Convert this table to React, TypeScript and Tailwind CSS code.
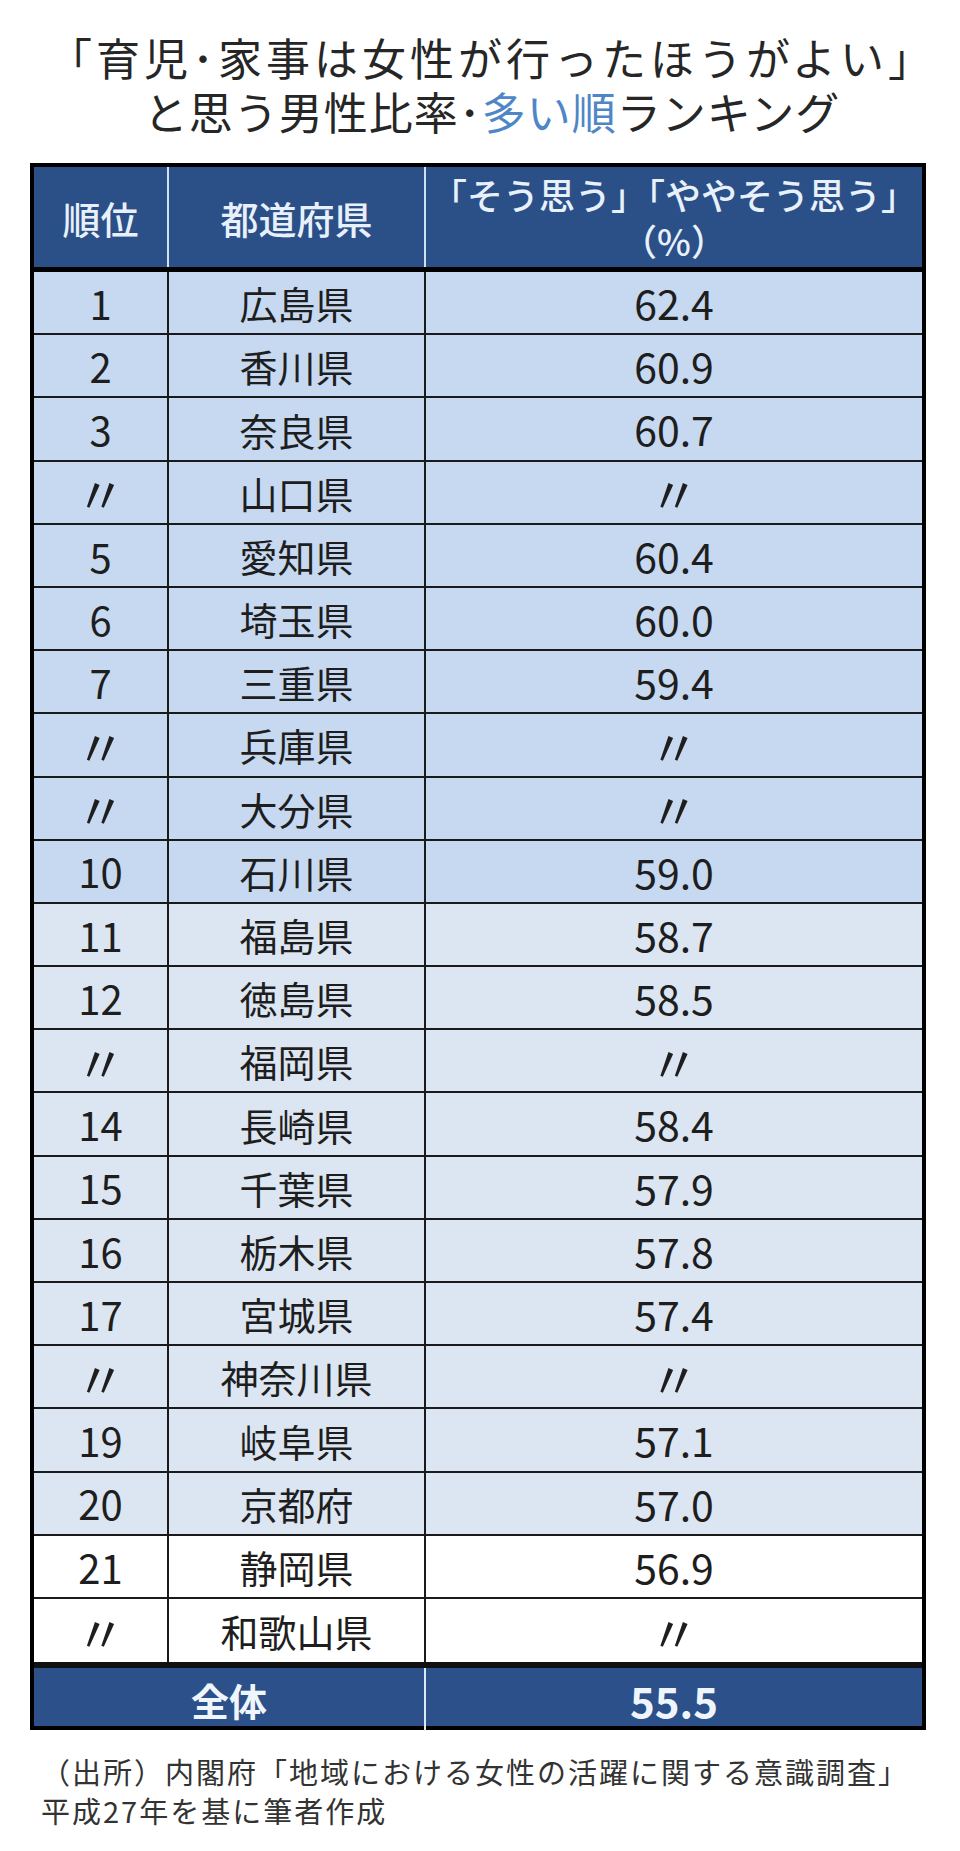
import React from "react";

const rows: { rank: string; pref: string; value: string }[] = [
  { rank: "1", pref: "広島県", value: "62.4" },
  { rank: "2", pref: "香川県", value: "60.9" },
  { rank: "3", pref: "奈良県", value: "60.7" },
  { rank: "〃", pref: "山口県", value: "〃" },
  { rank: "5", pref: "愛知県", value: "60.4" },
  { rank: "6", pref: "埼玉県", value: "60.0" },
  { rank: "7", pref: "三重県", value: "59.4" },
  { rank: "〃", pref: "兵庫県", value: "〃" },
  { rank: "〃", pref: "大分県", value: "〃" },
  { rank: "10", pref: "石川県", value: "59.0" },
  { rank: "11", pref: "福島県", value: "58.7" },
  { rank: "12", pref: "徳島県", value: "58.5" },
  { rank: "〃", pref: "福岡県", value: "〃" },
  { rank: "14", pref: "長崎県", value: "58.4" },
  { rank: "15", pref: "千葉県", value: "57.9" },
  { rank: "16", pref: "栃木県", value: "57.8" },
  { rank: "17", pref: "宮城県", value: "57.4" },
  { rank: "〃", pref: "神奈川県", value: "〃" },
  { rank: "19", pref: "岐阜県", value: "57.1" },
  { rank: "20", pref: "京都府", value: "57.0" },
  { rank: "21", pref: "静岡県", value: "56.9" },
  { rank: "〃", pref: "和歌山県", value: "〃" },
];

function rowBg(i: number) {
  if (i < 10) return "bg-[#c6d9f1]";
  if (i < 20) return "bg-[#dce6f2]";
  return "bg-white";
}

// ditto marks are drawn bigger than the digits
function Cell({ text, size }: { text: string; size: string }) {
  if (text === "〃") {
    return <span className="text-[50px] leading-[50px]">〃</span>;
  }
  return <span className={size}>{text}</span>;
}

export default function App() {
  return (
    <div className="min-h-[1851px] w-[960px] bg-white font-['Noto_Sans_CJK_JP','Noto_Sans',sans-serif] text-[#1e1e1e]">
      {/* Title */}
      <div className="pl-[24px] pt-[30px] text-center text-[44px] leading-[54px] text-[#262626]">
        <p className="tracking-[4px]">「育児･家事は女性が行ったほうがよい」</p>
        <p className="tracking-[1px]">
          と思う男性比率･<span className="text-[#4f86c6]">多い順</span>
          ランキング
        </p>
      </div>

      {/* Table */}
      <div className="ml-[30px] mt-[25px] w-[896px] border-4 border-black">
        <div className="grid h-[105px] grid-cols-[135px_257px_1fr] border-b-[5px] border-black bg-[#2b4f87] font-medium text-[#e8f1fb]">
          <div className="flex items-center justify-center border-r-2 border-[#cfe1f5] text-[38px]">
            順位
          </div>
          <div className="flex items-center justify-center border-r-2 border-[#cfe1f5] text-[38px]">
            都道府県
          </div>
          <div className="flex flex-col items-center justify-center text-[36px] leading-[46px]">
            <span>「そう思う」「ややそう思う」</span>
            <span>（%）</span>
          </div>
        </div>

        {rows.map((r, i) => (
          <div
            key={i}
            className={`grid h-[63.2px] grid-cols-[135px_257px_1fr] ${rowBg(i)} ${
              i < rows.length - 1 ? "border-b-2 border-[#1a1a1a]" : ""
            }`}
          >
            <div className="flex items-center justify-center border-r-2 border-[#1a1a1a]">
              <Cell text={r.rank} size="text-[40px]" />
            </div>
            <div className="flex items-center justify-center border-r-2 border-[#1a1a1a] text-[38px]">
              {r.pref}
            </div>
            <div className="flex items-center justify-center">
              <Cell text={r.value} size="text-[41px]" />
            </div>
          </div>
        ))}

        <div className="grid h-[64px] grid-cols-[392px_1fr] border-t-[6px] border-[#111] bg-[#2c5089] font-bold text-[#eef5fd]">
          <div className="flex items-center justify-center border-r-2 border-[#dbe8f6] text-[38px]">
            全体
          </div>
          <div className="flex items-center justify-center text-[42px]">
            55.5
          </div>
        </div>
      </div>

      {/* Source note */}
      <div className="pl-[41px] pt-[22px] text-[29px] leading-[39px] tracking-[2px] text-[#333]">
        <p>（出所）内閣府「地域における女性の活躍に関する意識調査」</p>
        <p>平成27年を基に筆者作成</p>
      </div>
    </div>
  );
}
